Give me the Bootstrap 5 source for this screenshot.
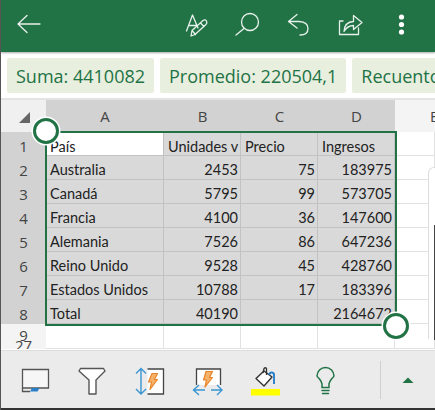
<!DOCTYPE html>
<html lang="es">
<head>
<meta charset="UTF-8">
<title>Excel</title>
<link href="https://cdn.jsdelivr.net/npm/bootstrap@5.3.0/dist/css/bootstrap.min.css" rel="stylesheet">
<style>
html, body { margin: 0; width: 435px; height: 410px; overflow: hidden; background: #fff; }
.xl-app { width: 435px; height: 410px; position: relative; overflow: hidden; border-left: 1px solid #555; }
.xl-top { height: 52px; background: #217346; box-shadow: 0 1px 2px rgba(0,0,0,.35); position: relative; z-index: 3; }
.xl-top svg { display: block; }
.xl-strip { height: 48px; padding: 6px 0 0 6px; gap: 6px; background: #fff; border-bottom: 2px solid #e3e3e3; overflow: hidden; }
.xl-chip { height: 35px; padding: 0 9px; background: #e9efdf; border-radius: 2px; color: #217346; font: 18px/36px "Open Sans", sans-serif; white-space: nowrap; flex: none; }
.xl-sheet { display: grid; grid-template-columns: 45px 118px 77px 77px 77px 40px; grid-template-rows: 32px repeat(8, 24px) 25px; height: 250px; font-family: Lato, sans-serif; }
.xl-hd { background: #d2d2d2; color: #444; line-height: 32px; text-align: center; font-family: "Open Sans", sans-serif; font-size: 15px; }
.xl-hd-off { background: #f4f4f4; text-align: left; padding-left: 35px; overflow: hidden; }
.xl-corner { background: #f0f0f0; position: relative; }
.xl-corner::after { content: ""; position: absolute; left: 18px; top: 12px; border-style: solid; border-width: 0 0 11px 11px; border-color: transparent transparent #666 transparent; }
.xl-rn { background: #d2d2d2; color: #444; text-align: center; font: 15px/24px "Open Sans", sans-serif; padding-top: 2px; }
.xl-c { background: #d9d9d9; color: #222; font-size: 14.500px; line-height: 21px; padding: 3px 2px 0 4px; white-space: nowrap; overflow: hidden; border-right: 1px solid #c2c2c2; border-bottom: 1px solid #c2c2c2; }
.xl-first { padding-top: 4px; }
.xl-num { text-align: right; }
.xl-active { background: #fff; }
.xl-blank { background: #fff; border-right: 1px solid #e2e2e2; border-bottom: 1px solid #e2e2e2; }
.xl-rn9 { background: #f4f4f4; color: #444; text-align: center; font: 15px/14px "Open Sans", sans-serif; overflow: hidden; }
.xl-rn9 span { display: block; background: #f4f4f4; height: 12px; line-height: 17px; }
.xl-rn9 b { display: block; font-weight: 400; height: 13px; padding-top: 4px; }
.xl-sel { position: absolute; left: 44px; top: 131px; width: 352px; height: 195px; border: 2.5px solid #217346; pointer-events: none; }
.xl-handle { position: absolute; width: 26px; height: 26px; border-radius: 50%; background: #fff; border: 3px solid #217346; box-shadow: 0 0 0 1.5px #fff; }
.xl-h1 { left: 32px; top: 118px; }
.xl-h2 { left: 382px; top: 313px; }
.xl-pane { position: absolute; left: 427px; top: 167px; width: 10px; height: 172px; background: #fff; border: 1px solid #dcdcdc; border-radius: 6px 0 0 0; border-bottom: 0; }
.xl-edge { position: absolute; right: 0; top: 225px; width: 1px; height: 115px; background: #444; }
.xl-bottom { height: 58px; background: #ebebeb; border-top: 1px solid #dcdcdc; padding-left: 5px; position: absolute; left: 0; right: 0; top: 350px; }
.xl-bottom svg { flex: none; display: block; }
.xl-rule { width: 1px; height: 38px; background: #d0d0d0; margin-left: 26px; }
.xl-foot { position: absolute; left: 0; right: 0; top: 408px; height: 2px; background: #333; }
</style>
</head>
<body>
<div class="xl-app">
  <div class="xl-top">
    <svg width="435" height="52" viewBox="1 0 435 52" fill="none" stroke="#e8f1ec" stroke-width="1.300" stroke-linecap="round" stroke-linejoin="round">
      <path d="M18 24H40M27 15.500L18 24L27 32.500"/>
      <path d="M186.500 31L192.500 15L198 28M188.500 25.500H196"/>
      <path d="M191 36L192 30.500L203 20.500Q205.500 19 206.500 21T206 24.500L195 34.500ZM192 30.500L195.500 34.500M200.500 23L204 26.500"/>
      <circle cx="250" cy="22" r="8.500"/>
      <path d="M244 28.500L236 35"/>
      <path d="M297 14.500L288.500 21.500L297 28M288.500 21.500H299Q308 22 308 28.500T300 35"/>
      <path d="M339.500 21V34.500H358.500V28M339.500 21H343"/>
      <path d="M344 31.500Q344.500 22 353.500 21.500V15.500L362 22.500L353.500 29.500V25.500Q347.500 25.500 344 31.500Z"/>
      <g fill="#fff" stroke="none"><circle cx="401.500" cy="17" r="2.600"/><circle cx="401.500" cy="24.500" r="2.600"/><circle cx="401.500" cy="32" r="2.600"/></g>
    </svg>
  </div>
  <div class="xl-strip d-flex">
    <div class="xl-chip">Suma: 4410082</div>
    <div class="xl-chip">Promedio: 220504,1</div>
    <div class="xl-chip">Recuento: 48</div>
  </div>
  <div class="xl-sheet" id="sheet"></div>
  <div class="xl-pane"></div>
  <div class="xl-edge"></div>
  <div class="xl-sel"></div>
  <div class="xl-handle xl-h1"></div>
  <div class="xl-handle xl-h2"></div>
  <div class="xl-bottom d-flex align-items-center">
    <svg width="58" height="58" viewBox="0 0 58 58" fill="none">
      <path d="M16.500 18.500H42.500V37H16.500Z" stroke="#555" stroke-width="1.300" fill="#f6f6f6"/>
      <path d="M16.500 37V40.500H24" stroke="#555" stroke-width="1.300"/>
      <path d="M24 40.500L26 37H33.500L31.500 40.500Z" fill="#2a7fc9"/>
    </svg>
    <svg width="58" height="58" viewBox="0 0 58 58" fill="none">
      <path d="M15 20L16.500 17.500H39.500L41 20L32 29V43H25V29Z" fill="#fff" stroke="#555" stroke-width="1.400" stroke-linejoin="round"/>
    </svg>
    <svg width="58" height="58" viewBox="0 0 58 58" fill="none">
      <path d="M25.500 18H41.500V43H25.500" fill="#fff" stroke="#444" stroke-width="1.300"/>
      <path d="M30 22.500H35.500L32.500 28.500H35.500L28 38.500L29.500 31H26.500Z" fill="#f7b26a" stroke="#e8842a" stroke-width="1.200" stroke-linejoin="round"/>
      <path d="M19 17.500V43M14 22.500L19 17.500L24 22.500M14 38L19 43L24 38" stroke="#3a96d2" stroke-width="1.400"/>
    </svg>
    <svg width="58" height="58" viewBox="0 0 58 58" fill="none">
      <path d="M16.500 34V18H40.500V34" fill="#fff" stroke="#444" stroke-width="1.300"/>
      <path d="M26 20.500H32.500L29.500 26.500H32.500L25 36L26.500 29H23.500Z" fill="#f7b26a" stroke="#e8842a" stroke-width="1.200" stroke-linejoin="round"/>
      <path d="M13.500 39H25M31 39H42M19 34L13.500 39L19 44M37 34L42 39L37 44" stroke="#3a96d2" stroke-width="1.400"/>
    </svg>
    <svg width="58" height="58" viewBox="0 0 58 58" fill="none">
      <path d="M26 20L18 27.500L26 35L34 26Z" fill="#fff" stroke="#333" stroke-width="1.400" stroke-linejoin="round"/>
      <path d="M25 22L26 17.500Q27.500 16 28.500 17.500V24" stroke="#333" stroke-width="1.300"/>
      <path d="M31 24Q32 21 34 21.500Q36.500 22 36 25V33" stroke="#2a7fc9" stroke-width="1.900"/>
      <rect x="13" y="38" width="29" height="6.500" fill="#ffff00"/>
    </svg>
    <svg width="58" height="58" viewBox="0 0 58 58" fill="none" stroke="#217346" stroke-width="1.500" stroke-linecap="round">
      <path d="M26 36.500V33Q25.500 30.500 23.500 28Q21 25.500 21 25A8.500 8.500 0 1 1 38 25Q38 25.500 35.500 28Q33.500 30.500 33 33V36.500Z"/>
      <path d="M26 39.500H33M26.500 42.500H32.500"/>
    </svg>
    <div class="xl-rule"></div>
    <svg class="ms-3" width="22" height="22" viewBox="0 0 22 22"><path d="M5.500 14L11 8.500L16.500 14Z" fill="#217346"/></svg>
  </div>
  <div class="xl-foot"></div>
</div>
<script>
  // Fill the sheet grid from the table data
  const rows = [
    ['País', 'Unidades v', 'Precio', 'Ingresos'],
    ['Australia', 2453, 75, 183975],
    ['Canadá', 5795, 99, 573705],
    ['Francia', 4100, 36, 147600],
    ['Alemania', 7526, 86, 647236],
    ['Reino Unido', 9528, 45, 428760],
    ['Estados Unidos', 10788, 17, 183396],
    ['Total', 40190, '', 2164672]
  ];
  let html = '<div class="xl-corner"></div>';
  ['A', 'B', 'C', 'D'].forEach(l => { html += `<div class="xl-hd">${l}</div>`; });
  html += '<div class="xl-hd xl-hd-off">E</div>';
  rows.forEach((r, i) => {
    html += `<div class="xl-rn">${i + 1}</div>`;
    r.forEach((v, j) => {
      const cls = (typeof v === 'number' ? ' xl-num' : '') + (i === 0 ? ' xl-first' : '') + (i === 0 && j === 0 ? ' xl-active' : '');
      html += `<div class="xl-c${cls}">${v}</div>`;
    });
    html += '<div class="xl-blank"></div>';
  });
  html += '<div class="xl-rn9"><b>9</b><span>27</span></div>';
  for (let j = 0; j < 5; j++) html += '<div class="xl-blank"></div>';
  document.getElementById('sheet').innerHTML = html;
</script>
<script src="https://cdn.jsdelivr.net/npm/bootstrap@5.3.0/dist/js/bootstrap.bundle.min.js"></script>
</body>
</html>
